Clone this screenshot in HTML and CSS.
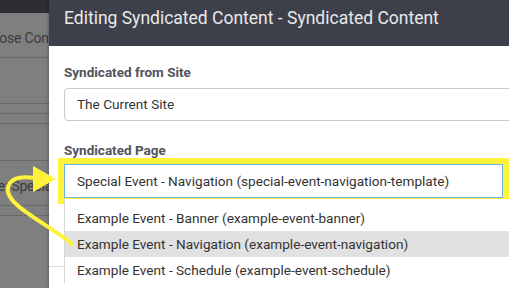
FILE: index.html
```html
<!DOCTYPE html>
<html lang="en">
<head>
    <meta charset="UTF-8">
    <title>Editing Syndicated Content</title>
    <link rel="stylesheet" href="styles.css">
</head>
<body>
    <!-- pagina de fondo, tapada por el overlay -->
    <div class="page-behind">
        <div class="topbar"></div>
        <div class="bg-title">Choose Content</div>
        <div class="bg-rule"></div>
        <div class="bg-dots first"></div>
        <div class="bg-dots"></div>
        <div class="bg-dots"></div>
        <div class="bg-rule second"></div>
        <div class="bg-field">Page: Special Event</div>
        <div class="bg-dots"></div>
        <div class="bg-dots"></div>
    </div>

    <div class="modal">
        <div class="modal-header">Editing Syndicated Content - Syndicated Content</div>
        <div class="modal-body">
            <label class="field-label">Syndicated from Site</label>
            <div class="text-input">The Current Site</div>

            <label class="field-label second">Syndicated Page</label>
            <div class="select-wrap">
                <div class="select-box">Special Event - Navigation (special-event-navigation-template)</div>
                <ul class="dropdown">
                    <li>Example Event - Banner (example-event-banner)</li>
                    <li class="active">Example Event - Navigation (example-event-navigation)</li>
                    <li>Example Event - Schedule (example-event-schedule)</li>
                </ul>
            </div>
        </div>
    </div>

    <svg class="callout-arrow" width="509" height="288" viewBox="0 0 509 288">
        <path d="M72 244 C52 226 3 205 8 187 C11 177 22 176 35 178" fill="none" stroke="#fff23a" stroke-width="4" stroke-linecap="round"/>
        <polygon points="33,166 56,179 33,192" fill="#fff23a"/>
    </svg>
</body>
</html>
```

FILE: styles.css
```css
html, body {
    margin: 0;
    width: 509px;
    height: 288px;
    overflow: hidden;
}

body {
    position: relative;
    font-family: Roboto, "Liberation Sans", sans-serif;
    background-color: #7f7f7f;
}

/* pagina detras del modal (ya oscurecida) */
.page-behind {
    margin-left: -25px;
    color: #3b3b3b;
}

.topbar {
    height: 13px;
    background-color: #2c2e33;
}

.bg-title {
    font-size: 14px;
    line-height: 20px;
    margin-top: 15px;
    letter-spacing: -0.2px;
}

.bg-rule {
    height: 1px;
    background-color: #6a6a6a;
    margin-top: 9px;
}

.bg-rule.second {
    margin-top: 36px;
}

.bg-dots {
    border-top: 1px dotted #555;
    margin-top: 9px;
}

.bg-dots.first {
    margin-top: 45px;
}

.bg-field {
    font-size: 14px;
    line-height: 20px;
    margin: 15px 0 0 -1px;
    letter-spacing: -0.2px;
}

/* modal */
.modal {
    position: absolute;
    top: 0;
    left: 49px;
    width: 520px;
    height: 288px;
    background-color: #fff;
    box-shadow: -1px 0 3px rgba(0,0,0,0.25);
}

.modal-header {
    height: 46px;
    box-sizing: border-box;
    padding: 7px 15px 0;
    background-color: #3d404a;
    color: #e9e9ea;
    font-size: 17.5px;
    line-height: 22px;
    white-space: nowrap;
}

.modal-body {
    height: 221px;
    box-sizing: border-box;
    padding: 18px 0 0 15px;
    border-bottom: 1px solid #dcdcdc;
}

.field-label {
    display: block;
    font-size: 13.5px;
    font-weight: bold;
    line-height: 16px;
    color: #50545d;
}

.field-label.second {
    margin-top: 21px;
}

.text-input {
    margin-top: 8px;
    height: 31px;
    border: 1px solid #c9c9c9;
    border-radius: 4px;
    padding-left: 12px;
    font-size: 13.6px;
    line-height: 31px;
    color: #333;
}

.select-wrap {
    position: relative;
    width: 439px;
    margin-top: 6px;
}

.select-box {
    height: 32px;
    border: 1px solid #6db0e6;
    padding-left: 12px;
    font-size: 13.6px;
    line-height: 32px;
    color: #333;
    white-space: nowrap;
    outline: 6px solid #fff23a;
}

.dropdown {
    position: absolute;
    top: 100%;
    left: 0;
    width: 520px;
    margin: 1px 0 0;
    padding: 6px 0 0;
    list-style: none;
    background-color: #fff;
    border-left: 1px solid #d6d6d6;
}

.dropdown li {
    height: 26px;
    padding-left: 12px;
    font-size: 13.6px;
    line-height: 26px;
    color: #333;
    white-space: nowrap;
}

.dropdown li.active {
    background-color: #e1e1e1;
}

.callout-arrow {
    position: absolute;
    top: 0;
    left: 0;
}
```
